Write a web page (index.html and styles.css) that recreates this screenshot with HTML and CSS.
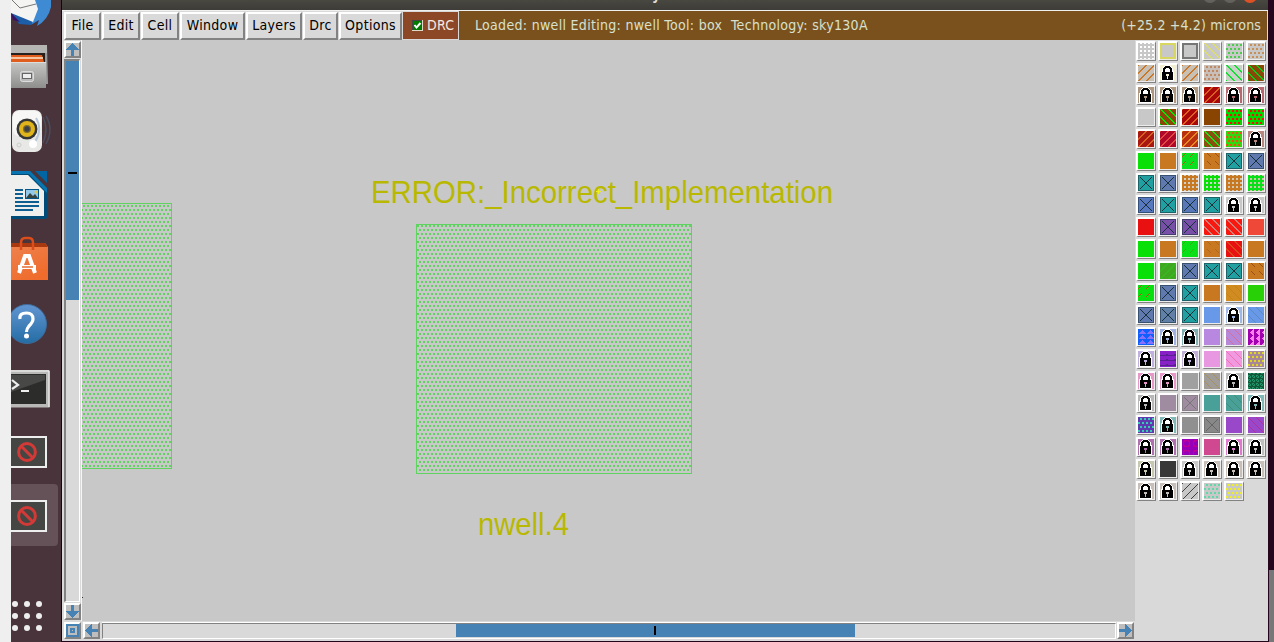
FILE: index.html
```html
<!DOCTYPE html>
<html lang="en">
<head>
<meta charset="utf-8">
<title>Layout editor</title>
<link rel="stylesheet" href="styles.css">
</head>
<body>
<div class="screen">
  <div class="edge"></div>
  <nav class="dock">
    <svg class="slot first" viewBox="0 0 50 36"><path d="M0 12 8 24 20 25 34 16 38 4 38 0H0z" fill="#1c5fa8"/><path d="M24 0H40V7Q37 20 26 26L28 20 21 24 22 15z" fill="#3e8bd4"/><path d="M0 13 9 22 2 20z" fill="#3a1267"/><path d="M0 0H24L27 9 22 22 0 13z" fill="#f4f4f2"/><path d="M1 0 9 8 25 4" fill="none" stroke="#777" stroke-width="1"/></svg>
    <svg class="slot" viewBox="0 0 50 64"><path d="M0 9H36L37 48H0z" fill="#999"/><path d="M0 9H36V17H0z" fill="#b5b5b3"/><path d="M0 17H34V27H0z" fill="#26211e"/><path d="M0 19H31L33 26H0z" fill="#e05d1d"/><path d="M0 22H32" stroke="#fce7cc" stroke-width="1.5"/><path d="M0 26H35V52H0z" fill="url(#cab)"/><path d="M0 26.500H35" stroke="#ddd"/><rect x="9.500" y="35.500" width="13" height="10" rx="2" fill="#bbb" stroke="#ddd"/><rect x="11.500" y="37.500" width="9" height="5" fill="#eee" stroke="#666"/><defs><linearGradient id="cab" x2="0" y2="1"><stop stop-color="#c7c7c5"/><stop offset="1" stop-color="#8e8e8c"/></linearGradient></defs></svg>
    <svg class="slot" viewBox="0 0 50 64"><path d="M32 17Q38 29 32 43M35 16Q43 29 35 44" fill="none" stroke="#4b4c5e" stroke-width="1.500"/><rect x="1" y="10" width="30" height="42" rx="7" fill="#e8e8e6"/><rect x="2" y="11" width="28" height="25" rx="6" fill="#f7f7f5"/><path d="M25 18Q32 29 24 42" fill="none" stroke="#b9c8da" stroke-width="2"/><circle cx="16" cy="29" r="10.500" fill="#363636"/><circle cx="16" cy="29" r="8" fill="#dfb51b"/><circle cx="16" cy="29" r="4" fill="#806b2c"/><circle cx="16" cy="29" r="2.700" fill="#3b4047"/><circle cx="22" cy="44" r="4" fill="#fff"/><circle cx="8" cy="45" r="2" fill="none" stroke="#ccc"/></svg>
    <svg class="slot" viewBox="0 0 50 64"><path d="M0 7H19L36 24V53Q36 55 33 55H0z" fill="#004c78"/><path d="M0 7H19L36 24V29L18 10H0z" fill="#0875b0"/><path d="M24 7H36V19z" fill="#0065a0"/><path d="M0 11H17L33 27V52H0z" fill="#efefed"/><path d="M4 26H12M4 30H12M4 34H12M4 38H28M4 42H28M4 46H22" stroke="#0c5f90" stroke-width="1.800"/><rect x="14.500" y="25.500" width="13" height="9" fill="#91c9ea" stroke="#00568a"/><path d="M15 34 19 29 22 32 24 30 27 34z" fill="#36423c"/><circle cx="25" cy="28" r="1.500" fill="#ddc557"/></svg>
    <svg class="slot" viewBox="0 0 50 64"><path d="M0 15H34L37 19V52H0z" fill="url(#bag)"/><path d="M0 15H34L37 19H0z" fill="#a8380f"/><path d="M10 22V15Q10 10 14 10H18Q22 10 22 15V22" fill="none" stroke="#dc4d1c" stroke-width="2.500"/><path d="M8 45 14 28H18L24 45M7 39H25" fill="none" stroke="#fff" stroke-width="4"/><path d="M11 39H22" stroke="#e36b30" stroke-width="1.500"/><defs><linearGradient id="bag" y2="1" x2=".5"><stop stop-color="#ee8350"/><stop offset="1" stop-color="#ef6c2c"/></linearGradient></defs></svg>
    <svg class="slot" viewBox="0 0 50 64"><circle cx="16" cy="32" r="19.500" fill="url(#help)" stroke="#3e6b9b"/><path d="M9 27Q8 21 15.500 21Q22 21 22 27Q22 30 18 34Q15.500 37 15.500 40" fill="none" stroke="#fff" stroke-width="3.200"/><circle cx="15.500" cy="44" r="2.500" fill="#fff"/><defs><linearGradient id="help" x2="0" y2="1"><stop stop-color="#6295d2"/><stop offset="1" stop-color="#246da4"/></linearGradient></defs></svg>
    <svg class="slot" viewBox="0 0 50 64"><path d="M0 14H38.500V51.500H0z" fill="#b8b8b6"/><path d="M0 15H38M38 15V51" fill="none" stroke="#e5e5e3" stroke-width="1.500"/><path d="M0 18H35V48H0z" fill="#2c2c2a"/><path d="M0 19H34V24L0 36z" fill="#484846"/><path d="M1 24 7 29 1 33M10 35H18" fill="none" stroke="#eee" stroke-width="2.200"/></svg>
    <svg class="slot" viewBox="0 0 50 64"><path d="M0 16H36V48H0z" fill="#eee"/><path d="M0 18H34V46H0z" fill="#454543"/><circle cx="16" cy="32" r="8.400" fill="none" stroke="#d23a38" stroke-width="3"/><path d="M10 26 22 38" stroke="#d23a38" stroke-width="3"/></svg>
    <svg class="slot" viewBox="0 0 50 64"><rect x="-5" y="0" width="52" height="62" rx="4" fill="#655258"/><path d="M0 16H36V48H0z" fill="#eee"/><path d="M0 18H34V46H0z" fill="#454543"/><circle cx="16" cy="32" r="8.400" fill="none" stroke="#d23a38" stroke-width="3"/><path d="M10 26 22 38" stroke="#d23a38" stroke-width="3"/></svg>
    <svg class="slot apps" viewBox="0 0 50 94"><g fill="#eee"><circle cx="4" cy="56" r="3"/><circle cx="16" cy="56" r="3"/><circle cx="28" cy="56" r="3"/><circle cx="4" cy="68" r="3"/><circle cx="16" cy="68" r="3"/><circle cx="28" cy="68" r="3"/><circle cx="4" cy="80" r="3"/><circle cx="16" cy="80" r="3"/><circle cx="28" cy="80" r="3"/></g></svg>
  </nav>
  <main class="window">
    <header class="titlebar">
      <span class="title">layout1</span>
      <svg class="controls" viewBox="0 0 60 10"><circle cx="8" cy="-4" r="7" fill="#63625d"/><circle cx="28" cy="-4" r="7" fill="#63625d"/><circle cx="48" cy="-4" r="7" fill="#dd5224"/></svg>
    </header>
    <div class="menubar">
      <button class="menu file">File</button><button class="menu edit">Edit</button><button class="menu cell">Cell</button><button class="menu win">Window</button><button class="menu layers">Layers</button><button class="menu drc">Drc</button><button class="menu options">Options</button>
      <div class="check"><svg width="11" height="11" viewBox="0 0 11 11"><path d="M0 0H11V11H0z" fill="#e0d8c8"/><path d="M0 0H10V10H0z" fill="#444"/><path d="M1 1H10V10H1z" fill="#007a00"/><path d="M2.500 5 4.500 7.500 8.500 3" fill="none" stroke="#fff" stroke-width="2"/></svg><span>DRC</span></div>
      <div class="status"><span class="loaded">Loaded: nwell Editing: nwell Tool: box&nbsp; Technology: sky130A</span><span class="coords">(+25.2 +4.2) microns</span></div>
    </div>
    <div class="work">
      <div class="viewer">
        <div class="vscroll">
          <svg class="arrow" viewBox="0 0 13 13"><path d="M6.500 0 13 7H8V13H5V7H0z"/></svg>
          <div class="vtrough"><div class="vthumb"><i></i></div></div>
          <svg class="arrow" viewBox="0 0 13 13"><path d="M6.500 13 13 6H8V0H5V6H0z"/></svg>
        </div>
        <svg class="layout" viewBox="82 40 1053 581">
          <defs><pattern id="well" width="4" height="8" patternUnits="userSpaceOnUse" x="1" y="1"><path d="M0 0H2V2H0zM2 4H4V6H2z" fill="#5fd35f"/></pattern></defs>
          <rect x="60" y="203.500" width="111.500" height="265" fill="url(#well)" stroke="#5fd35f"/>
          <rect x="416.500" y="224.500" width="275" height="249" fill="url(#well)" stroke="#5fd35f"/>
          <text x="371" y="203" textLength="462" lengthAdjust="spacingAndGlyphs">ERROR:_Incorrect_Implementation</text>
          <text x="478" y="535" textLength="91" lengthAdjust="spacingAndGlyphs">nwell.4</text>
          <path d="M596 191.500H601M598.500 189V194" stroke="#f0f020"/>
          <path d="M82 597H83V598H82z" fill="#333"/>
        </svg>
        <div class="corner"><svg class="arrow" viewBox="0 0 13 13"><path fill-rule="evenodd" d="M0 0H13V13H0zM2 2V11H11V2z"/><path fill-rule="evenodd" d="M4 4H9V9H4zM6 6V7H7V6z"/></svg></div>
        <div class="hscroll">
          <svg class="arrow" viewBox="0 0 13 13"><path d="M0 6.500 7 0V5H13V8H7V13z"/></svg>
          <div class="htrough"><div class="hthumb"><i></i></div></div>
          <svg class="arrow" viewBox="0 0 13 13"><path d="M13 6.500 6 0V5H0V8H6V13z"/></svg>
        </div>
      </div>
      <aside class="palette" id="palette"></aside>
    </div>
  </main>
  <div class="behind"><div class="behind-bar"></div></div>
</div>
<script src="palette.js"></script>
</body>
</html>
```

FILE: styles.css
```css
* { box-sizing: border-box; }
body { margin: 0; background: #25061c; overflow: hidden; }
.screen { display: flex; width: 1274px; height: 642px; overflow: hidden; }
.edge { width: 11px; background: #efefef; }
.dock { width: 50px; background: #48343a; display: flex; flex-direction: column; }
.slot { display: block; width: 50px; height: 64px; flex: none; }
.first { height: 36px; }
.apps { height: 94px; }
.window { width: 1207px; height: 641px; border-left: 1px solid #14060f; background: #d9d9d9; display: flex; flex-direction: column; font: 14px "DejaVu Sans Condensed", "DejaVu Sans", sans-serif; font-stretch: condensed; letter-spacing: .31px; }
.titlebar { height: 10px; flex: none; background: linear-gradient(#484740, #3d3c38); overflow: hidden; display: flex; justify-content: space-between; padding-left: 577px; }
.title { font-weight: bold; line-height: 10px; margin-top: -10px; color: #dfdbd2; }
.controls { width: 60px; height: 10px; margin-right: 6px; }
.menubar { height: 30px; flex: none; display: flex; padding: 1px 1px 0 2px; border-top: 1px solid #f0f0f0; background: #d9d9d9; }
.menu { height: 28px; margin: 0 1px 0 0; padding: 0 0 2px; flex: none; border: solid; border-width: 2px; border-color: #fff #828282 #828282 #fff; background: #d9d9d9; color: #000; font: inherit; font-stretch: condensed; letter-spacing: .31px; line-height: 22px; text-align: center; white-space: nowrap; }
.file { width: 37px; }
.edit { width: 38px; }
.cell { width: 38px; }
.win { width: 65px; }
.layers { width: 56px; }
.drc { width: 35px; }
.options { width: 63px; }
.check { width: 55px; height: 27px; flex: none; margin-right: 1px; padding: 0 0 1px 9px; display: flex; align-items: center; gap: 4px; background: #8b4726; color: #f5e9e0; }
.status { flex: 1; height: 29px; margin-top: -1px; padding: 0 6px 1px 16px; display: flex; justify-content: space-between; align-items: center; background: #7a511d; color: #d8e0cf; white-space: nowrap; }
.coords { letter-spacing: .15px; }
.work { flex: 1; display: flex; min-height: 0; }
.viewer { width: 1073px; padding-left: 1px; display: grid; grid-template-columns: 19px 1053px; grid-template-rows: 581px 20px; background: #d9d9d9; }
.vscroll { display: flex; flex-direction: column; align-items: flex-start; padding: 1px 0 0 1px; border-right: 1px solid #f6f6f6; background: #d9d9d9; }
.arrow { display: block; flex: none; width: 17px; height: 17px; border: solid; border-width: 2px; border-color: #fff #828282 #828282 #fff; background: #bebebe; fill: #4682b4; shape-rendering: crispEdges; }
.vtrough { width: 16px; height: 543px; margin: 1px 0; border: solid; border-width: 2px 1px 1px 2px; border-color: #828282 #fff #fff #828282; background: #d9d9d9; }
.vthumb { height: 239px; background: #4682b4; display: flex; align-items: center; justify-content: center; padding-bottom: 15px; }
.vthumb i { width: 9px; height: 2px; background: #000; }
.layout { display: block; width: 1053px; height: 581px; background: #c8c8c8; font: 30.5px "Liberation Sans", Arial, sans-serif; letter-spacing: 0; fill: #b8b800; }
.corner { padding: 1px 0 0 1px; }
.hscroll { display: flex; align-items: flex-start; padding: 1px 0 0 1px; gap: 1px; }
.htrough { width: 1014px; height: 16px; margin: 1px 0 0 1px; border: solid; border-width: 1px; border-color: #828282 #fff #fff #828282; box-shadow: 0 -1px #fff; padding-left: 353px; background: #d9d9d9; }
.hthumb { width: 399px; height: 13px; background: #4682b4; display: flex; align-items: center; justify-content: center; padding-right: 1px; }
.hthumb i { width: 2px; height: 9px; background: #000; }
.palette { width: 133px; padding: 1px 0 0 1px; display: grid; grid-template-columns: repeat(6, 20px); grid-auto-rows: 20px; gap: 2px; align-content: start; background: #d9d9d9; }
.swatch { width: 20px; height: 20px; border: solid; border-width: 2px 1px 1px 2px; border-color: #fff #828282 #828282 #fff; background: #ececec; }
.swatch svg { display: block; width: 16px; height: 16px; shape-rendering: crispEdges; }
.behind { width: 6px; padding: 570px 0 0 1px; background: #25061c; }
.behind-bar { height: 72px; background: #777; }
```

FILE: palette.js
```js
// Each layer: base colour, fill style, pattern colour.
// l lock, f frame, x cross, s staggered dots, g grid dots, / and \ diagonals, | wide \ diagonals,
// - rising dashes, _ falling dashes, t triangles, w waves, r rings, b bricks, n noise
const rows = [
  "c8c8c8 g fff,c8c8c8 f d8d860,c8c8c8 f 777,c8c8c8 | dcdc70,c8c8c8 s 48d048,c8c8c8 s c89058",
  "c8c0b4 / c87828,f0f0d0 l,c8c0b4 / c87828,c8c0b8 s c08860,c8d0c8 | 10e030,8a4808 | 10c818",
  "b09880 l,b09880 l,b09880 l,a80808 / d86020,b86870 l,b86870 l",
  "c8c8c8,8a4808 | 10e000,a80808 / e06020,884400,00d800 s f01010,00d800 s f01010",
  "a81810 / d86020,b00828 / e04840,b83010 / e88820,8a5010 | 20e018,30d810 s f05010,b88880 l",
  "08e008,c87820,08e020 - a06010,c87820 _ a05010,20a0a0 x,607ab0 x",
  "20a0a0 x,607ab0 x,c87820 g d0d0c8,08e008 g d0d0d0,c87820 g d0c8b0,08e018 g d8c0b0",
  "5878c0 x,20a0a0 x,5878b8 x,20a0a0 x,c8c8c8 l,c8c8c8 l",
  "e81010,7850a8 x,7850a8 x,f81810 | d08078,f81810 | d08078,f04838",
  "08e008,c87820,08e018 - 30b010,c87820 _ b06818,e81010 | d84818,c87820",
  "08e008,40a820 / 38b820,607ab0 x,20a0a0 x,20a0a0 x,c87820 _ 985010",
  "08e010 - b05010,607ab0 x,20a0a0 x,c87820,d08c20 \\ c88018,28d008",
  "607ab0 x,6080a8 x,20a0a0 x,6898e8,a0b8e8 l,6898e8 \\ 6088c0",
  "1060ff w 8870ff,a0b0e0 l,80b0b0 l,b888e0,b888d8 \\ d070a0,a000b0 t ff80e8",
  "c0b0e0 l,8820c8 b 582090,c0b0d8 l,e898e0,f098e0 \\ f070b0,a88898 s e0d820",
  "e898c8 l,e898c8 l,a0a0a0,a09c98 \\ a89060,b8b8b8 l,209068 n 105838",
  "b8b8b8 l,a08ca0,a08ca0 x 777,48a098,48a098 \\ 409078,80b8b8 l",
  "6038b0 s 30d0b0,80b8b8 l,909090,888888 x 666,9848c8,9848c8 \\ b030a0",
  "b070b0 l,b070b0 l,9800b8 r c00098,d04890,e078d0 l,c0c0c0 l",
  "c8c8b0 l,383838,c8c8c8 l,c8c0b8 l,c8c0b8 l,c8c0b8 l",
  "c8c0b8 l,c8c0b8 l,c8c8c8 h 404040,c8c8c8 s 60d8a8,c8c8c8 s f0f020"
];

const block = (x, y, w, h, c) => `<rect x="${x}" y="${y}" width="${w}" height="${h}" fill="${c}"/>`;

function pattern(kind, c, base) {
  let out = "";
  if (kind === "l") {
    const arch = "M4 7V4L6 2H9L11 4V7";
    return `<path d="${arch}" fill="#fff" stroke="#fff" stroke-width="4"/>` + block(1, 6, 13, 10, "#fff") +
      `<path d="${arch}" fill="none" stroke="#000" stroke-width="2"/>` + block(2, 7, 11, 8, "#000") +
      block(6, 9, 3, 2, base) + block(7, 11, 1, 3, base);
  }
  if (kind === "f") return `<rect x="1" y="1" width="14" height="14" fill="none" stroke="${c}" stroke-width="2"/>`;
  if (kind === "x") {
    const ink = c || "#18303c";
    return `<rect x=".5" y=".5" width="15" height="15" fill="none" stroke="${ink}" opacity=".55"/><path d="M2 2 14 14M14 2 2 14" stroke="${ink}" stroke-width="1.4"/>`;
  }
  for (let y = 0; y < 16; y++) for (let x = 0; x < 16; x++) {
    let on = false;
    if (kind === "g") on = (x + 2) % 4 < 2 && (y + 1) % 4 < 2;
    if (kind === "s") on = (y + 3) % 4 < 2 && (x + (y + 3 & 4 ? 2 : 0)) % 4 < 2;
    if (kind === "/") on = (x + y) % 8 < 1 || (x + y) % 8 === 7;
    if (kind === "h") on = (x + y) % 8 === 0;
    if (kind === "|") on = (x - y + 16) % 8 < 2;
    if (kind === "\\") on = (x - y + 16) % 8 === 0;
    if (kind === "-") on = (x + y) % 8 === 3 && y % 8 < 4;
    if (kind === "_") on = (x - y + 16) % 8 === 3 && y % 8 < 4;
    if (kind === "t") on = Math.abs(y % 6 - 3) < x % 6 - 1;
    if (kind === "w") on = Math.abs(x % 8 - 4) < y % 5;
    if (kind === "b") on = y % 5 > 3 || (x % 8 > 5 && y % 5 > 2);
    if (kind === "n") on = (x * 7 + y * 5 + x * y) % 4 < 2;
    if (kind === "r") on = Math.abs(Math.hypot(x % 10 - 4, y % 10 - 4) - 3) < .7;
    if (on) out += block(x, y, 1, 1, c);
  }
  return out;
}

document.getElementById("palette").innerHTML = rows.join(",").split(",").map(item => {
  const [base, kind, ink] = item.split(" ");
  return `<div class="swatch"><svg viewBox="0 0 16 16">${block(0, 0, 16, 16, "#" + base)}${kind ? pattern(kind, ink && "#" + ink, "#" + base) : ""}</svg></div>`;
}).join("");
```
